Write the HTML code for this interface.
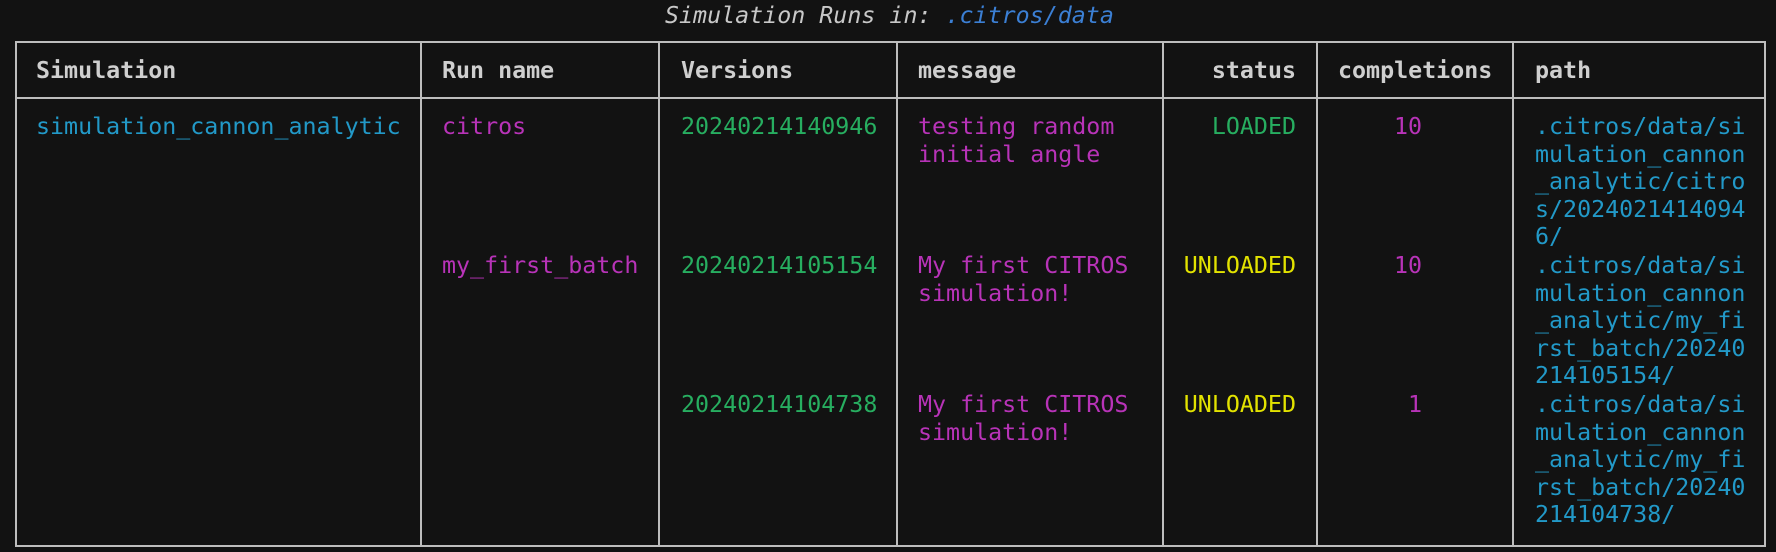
<!DOCTYPE html>
<html><head><meta charset="utf-8"><style>
html,body{margin:0;padding:0;width:1776px;height:552px;background:#121212;overflow:hidden}
body{position:relative;font-family:"DejaVu Sans Mono","Liberation Mono",monospace;font-size:23.3px;line-height:27.6px}
.t{position:absolute;white-space:pre}
.l{position:absolute;background:#bdbdbd}
.h{color:#cfcfcf;font-weight:bold}
.c{color:#2299c8}.m{color:#b833b8}.g{color:#27ae60}.y{color:#e3e300}
</style></head><body>
<div class="t" style="left:665px;top:2px;font-style:italic;color:#c8c8c8">Simulation Runs in: <span style="color:#3b7fd4">.citros/data</span></div>
<div class="l" style="left:15px;top:41px;width:1751px;height:2px"></div>
<div class="l" style="left:15px;top:97px;width:1751px;height:2px"></div>
<div class="l" style="left:15px;top:545px;width:1751px;height:2px"></div>
<div class="l" style="left:15px;top:41px;width:2px;height:506px"></div>
<div class="l" style="left:1764px;top:41px;width:2px;height:506px"></div>
<div class="l" style="left:420px;top:41px;width:2px;height:506px"></div>
<div class="l" style="left:658px;top:41px;width:2px;height:506px"></div>
<div class="l" style="left:896px;top:41px;width:2px;height:506px"></div>
<div class="l" style="left:1162px;top:41px;width:2px;height:506px"></div>
<div class="l" style="left:1316px;top:41px;width:2px;height:506px"></div>
<div class="l" style="left:1512px;top:41px;width:2px;height:506px"></div>

<div class="t h" style="left:36px;top:57px">Simulation</div>
<div class="t h" style="left:442px;top:57px">Run name</div>
<div class="t h" style="left:681px;top:57px">Versions</div>
<div class="t h" style="left:918px;top:57px">message</div>
<div class="t h" style="right:480px;top:57px">status</div>
<div class="t h" style="left:1338px;top:57px">completions</div>
<div class="t h" style="left:1535px;top:57px">path</div>

<div class="t c" style="left:36px;top:113px">simulation_cannon_analytic</div>
<div class="t m" style="left:442px;top:113px">citros</div>
<div class="t g" style="left:681px;top:113px">20240214140946</div>
<div class="t m" style="left:918px;top:113px">testing random
initial angle</div>
<div class="t g" style="right:480px;top:113px">LOADED</div>
<div class="t m" style="right:354px;top:113px">10</div>
<div class="t c" style="left:1535px;top:113px">.citros/data/si
mulation_cannon
_analytic/citro
s/2024021414094
6/</div>

<div class="t m" style="left:442px;top:252px">my_first_batch</div>
<div class="t g" style="left:681px;top:252px">20240214105154</div>
<div class="t m" style="left:918px;top:252px">My first CITROS
simulation!</div>
<div class="t y" style="right:480px;top:252px">UNLOADED</div>
<div class="t m" style="right:354px;top:252px">10</div>
<div class="t c" style="left:1535px;top:252px">.citros/data/si
mulation_cannon
_analytic/my_fi
rst_batch/20240
214105154/</div>

<div class="t g" style="left:681px;top:391px">20240214104738</div>
<div class="t m" style="left:918px;top:391px">My first CITROS
simulation!</div>
<div class="t y" style="right:480px;top:391px">UNLOADED</div>
<div class="t m" style="right:354px;top:391px">1</div>
<div class="t c" style="left:1535px;top:391px">.citros/data/si
mulation_cannon
_analytic/my_fi
rst_batch/20240
214104738/</div>
</body></html>
